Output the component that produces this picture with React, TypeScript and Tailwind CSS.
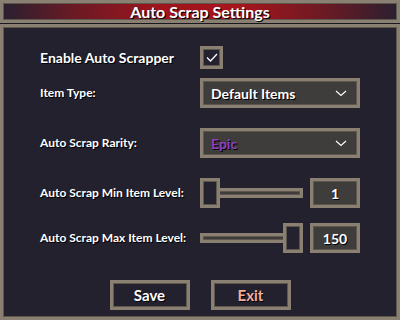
import { useState } from "react";

const frame = "border-[3px] border-[#8a8072] shadow-[inset_0_0_0_1px_#5e574f]";
const txt = "text-white [text-shadow:1px_1px_0_#000]";

function Chevron() {
  return (
    <svg width="12" height="7" viewBox="0 0 12 7" className="text-white">
      <path d="M1 1 L6 5.5 L11 1" fill="none" stroke="currentColor" strokeWidth="1.1" />
    </svg>
  );
}

function Dropdown({ value, color }: { value: string; color: string }) {
  return (
    <div className={`w-[160px] h-[30px] ${frame} bg-[#3e3d3c] flex items-center justify-between pl-[8px] pr-[10px]`}>
      <span className={`text-[14px] font-bold [text-shadow:1px_1px_0_#000] ${color}`}>{value}</span>
      <Chevron />
    </div>
  );
}

function Slider({ value, max }: { value: number; max: number }) {
  const pct = (value - 1) / (max - 1);
  return (
    <div className="flex items-center gap-[7px]">
      <div className="relative w-[103px] h-[30px] flex items-center">
        <div className={`w-full h-[10px] ${frame} bg-[#3e3d3c]`} />
        <div
          className={`absolute top-0 w-[20px] h-[30px] ${frame} bg-[#24222f]`}
          style={{ left: pct * 83 }}
        />
      </div>
      <div className={`w-[50px] h-[30px] ${frame} bg-[#3e3d3c] flex items-center justify-center`}>
        <span className={`text-[14px] font-bold ${txt}`}>{value}</span>
      </div>
    </div>
  );
}

export default function App() {
  const [enabled, setEnabled] = useState(true);

  return (
    <div className="w-[400px] h-[320px] bg-[#1a1920] flex flex-col gap-[1px] font-['Lato',sans-serif]">
      <div className={`h-[23px] ${frame} bg-[linear-gradient(90deg,#2a2030_0%,#6a1a24_18%,#a0141c_40%,#a8141c_60%,#6a1a24_82%,#2a2030_100%)] flex items-center justify-center`}>
        <span className={`text-[16px] font-bold leading-none ${txt}`}>Auto Scrap Settings</span>
      </div>
      <div className={`flex-1 ${frame} bg-[#23212e] pl-[37px] pt-[19px] flex flex-col`}>
        <div className="flex items-center h-[23px]">
          <span className={`w-[160px] text-[14px] font-bold ${txt}`}>Enable Auto Scrapper</span>
          <button
            onClick={() => setEnabled(!enabled)}
            className={`w-[23px] h-[23px] ${frame} bg-[#24222f] flex items-center justify-center`}
          >
            {enabled && (
              <svg width="12" height="9" viewBox="0 0 12 9">
                <path d="M1 4.5 L4.5 8 L11 1" fill="none" stroke="white" strokeWidth="1.3" />
              </svg>
            )}
          </button>
        </div>
        <div className="flex items-center mt-[9px]">
          <span className={`w-[160px] text-[12px] font-bold ${txt}`}>Item Type:</span>
          <Dropdown value="Default Items" color="text-white" />
        </div>
        <div className="flex items-center mt-[20px]">
          <span className={`w-[160px] text-[12px] font-bold ${txt}`}>Auto Scrap Rarity:</span>
          <Dropdown value="Epic" color="text-[#8e3fbc]" />
        </div>
        <div className="flex items-center mt-[20px]">
          <span className={`w-[160px] text-[12px] font-bold ${txt}`}>Auto Scrap Min Item Level:</span>
          <Slider value={1} max={150} />
        </div>
        <div className="flex items-center mt-[15px]">
          <span className={`w-[160px] text-[12px] font-bold ${txt}`}>Auto Scrap Max Item Level:</span>
          <Slider value={150} max={150} />
        </div>
        <div className="flex justify-center gap-[21px] mt-[27px] pr-[37px]">
          <button className={`w-[80px] h-[30px] ${frame} bg-[#23212e] text-[15px] font-bold ${txt}`}>Save</button>
          <button className={`w-[80px] h-[30px] ${frame} bg-[#23212e] text-[15px] font-bold text-[#f5ad9c] [text-shadow:1px_1px_0_#000]`}>Exit</button>
        </div>
      </div>
    </div>
  );
}
